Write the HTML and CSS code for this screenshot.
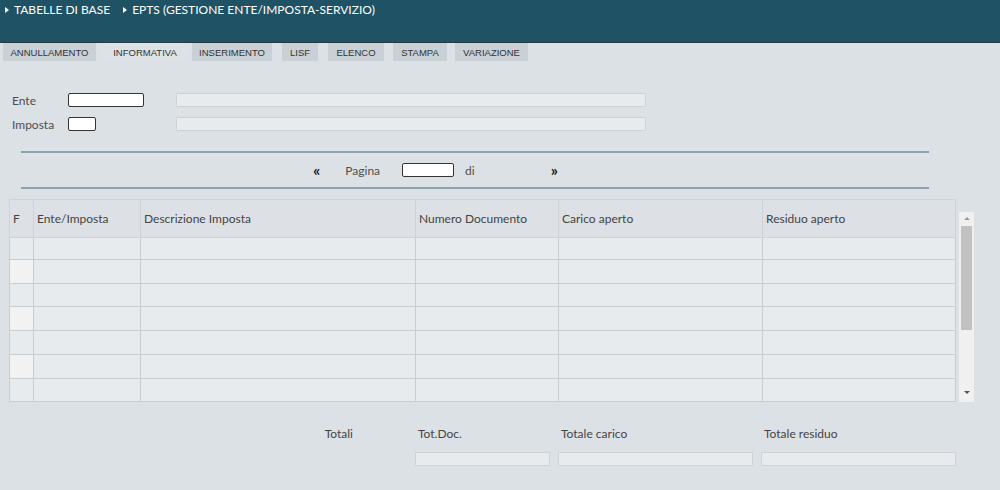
FILE: index.html
```html
<!DOCTYPE html>
<html lang="it">
<head>
<meta charset="utf-8">
<title>EPTS</title>
<link rel="stylesheet" href="styles.css">
</head>
<body>
<header class="topbar">
  <span class="crumb"><span class="tri"></span>TABELLE DI BASE</span>
  <span class="crumb"><span class="tri"></span>EPTS (GESTIONE ENTE/IMPOSTA-SERVIZIO)</span>
</header>
<nav class="tabs">
  <div class="tab t1">ANNULLAMENTO</div>
  <div class="tab t2 active">INFORMATIVA</div>
  <div class="tab t3">INSERIMENTO</div>
  <div class="tab t4">LISF</div>
  <div class="tab t5">ELENCO</div>
  <div class="tab t6">STAMPA</div>
  <div class="tab t7">VARIAZIONE</div>
</nav>
<main class="content">
  <section class="form">
    <div class="frow">
      <label class="flabel">Ente</label>
      <div class="inp inp-ente"></div>
      <div class="ro ro-long"></div>
    </div>
    <div class="frow">
      <label class="flabel">Imposta</label>
      <div class="inp inp-imp"></div>
      <div class="ro ro-long"></div>
    </div>
  </section>
  <section class="pager">
    <span class="nav prev">&laquo;</span>
    <span class="plabel">Pagina</span>
    <div class="inp inp-page"></div>
    <span class="di">di</span>
    <span class="nav next">&raquo;</span>
  </section>
  <section class="grid-wrap">
    <table class="grid">
      <colgroup>
        <col class="c1"><col class="c2"><col class="c3"><col class="c4"><col class="c5"><col class="c6">
      </colgroup>
      <thead>
        <tr><th>F</th><th>Ente/Imposta</th><th>Descrizione Imposta</th><th>Numero Documento</th><th>Carico aperto</th><th>Residuo aperto</th></tr>
      </thead>
      <tbody>
        <tr class="first"><td></td><td></td><td></td><td></td><td></td><td></td></tr>
        <tr class="alt"><td></td><td></td><td></td><td></td><td></td><td></td></tr>
        <tr class="short"><td></td><td></td><td></td><td></td><td></td><td></td></tr>
        <tr class="alt"><td></td><td></td><td></td><td></td><td></td><td></td></tr>
        <tr><td></td><td></td><td></td><td></td><td></td><td></td></tr>
        <tr class="alt"><td></td><td></td><td></td><td></td><td></td><td></td></tr>
        <tr class="short"><td></td><td></td><td></td><td></td><td></td><td></td></tr>
      </tbody>
    </table>
    <div class="scrollbar">
      <div class="arrow up"></div>
      <div class="thumb"></div>
      <div class="spacer"></div>
      <div class="arrow down"></div>
    </div>
  </section>
  <section class="totals">
    <div class="tl tl0">Totali</div>
    <div class="tl">Tot.Doc.</div>
    <div class="tl">Totale carico</div>
    <div class="tl">Totale residuo</div>
    <div></div>
    <div class="ro"></div>
    <div class="ro"></div>
    <div class="ro"></div>
  </section>
</main>
</body>
</html>
```

FILE: styles.css
```css
* { box-sizing: border-box; }
html, body { margin: 0; padding: 0; }
body {
  background: #dce1e5;
  font-family: Lato, "Open Sans", sans-serif;
  color: #4f4f4f;
  font-size: 12px;
  width: 1000px;
  height: 490px;
  overflow: hidden;
}
.topbar {
  height: 43px;
  background: #1f5264;
  border-bottom: 1px solid #263a44;
  padding: 2px 0 0 5px;
  display: flex;
  gap: 13px;
  color: #ffffff;
  font-size: 12px;
  line-height: 15px;
}
.crumb { display: flex; align-items: center; height: 15px; }
.tri {
  width: 0; height: 0;
  border-top: 3px solid transparent;
  border-bottom: 3px solid transparent;
  border-left: 4px solid #ffffff;
  margin-right: 5px;
}
.tabs {
  display: flex;
  height: 19px;
  padding-left: 3px;
  background: #dce1e5;
}
.tab {
  height: 18px;
  background: #c9d0d6;
  font-family: "Liberation Sans", Arial, sans-serif;
  font-size: 9.5px;
  color: #333;
  display: flex;
  align-items: center;
  justify-content: center;
}
.tab.active { background: #dde2e6; }
.t1 { width: 93px; margin-right: 6px; }
.t2 { width: 86px; margin-right: 4px; }
.t3 { width: 80px; margin-right: 10px; }
.t4 { width: 36px; margin-right: 10px; }
.t5 { width: 56px; margin-right: 9px; }
.t6 { width: 54px; margin-right: 8px; }
.t7 { width: 73px; }
.form { padding: 31px 0 0 12px; display: flex; flex-direction: column; gap: 10px; }
.frow { display: flex; align-items: center; height: 14px; }
.flabel { width: 56px; }
.inp {
  height: 14px;
  background: #fff;
  border: 1px solid #333;
  border-radius: 2px;
}
.inp-ente { width: 76px; margin-right: 32px; }
.inp-imp { width: 28px; margin-right: 80px; }
.ro {
  height: 14px;
  background: #e8ebee;
  border: 1px solid #cfd3d7;
  border-radius: 1px;
}
.ro-long { width: 470px; }
.pager {
  margin: 20px 71px 0 21px;
  border-top: 2px solid #8ea2ad;
  border-bottom: 2px solid #8ea2ad;
  height: 38px;
  display: flex;
  align-items: center;
  padding-left: 292px;
}
.nav { font-weight: bold; font-size: 16px; color: #222; line-height: 12px; }
.prev { margin-right: 25px; }
.plabel { margin-right: 22px; }
.inp-page { width: 52px; margin-right: 11px; }
.di { margin-right: 76px; }
.grid-wrap {
  margin: 10px 0 0 9px;
  display: flex;
  align-items: flex-start;
}
.grid {
  border-collapse: collapse;
  table-layout: fixed;
  width: 946px;
  border: 1px solid #d1d5d8;
}
.c1 { width: 24px; } .c2 { width: 107px; } .c3 { width: 275px; }
.c4 { width: 143px; } .c5 { width: 204px; } .c6 { width: 193px; }
.grid th {
  height: 38px;
  background: #dde1e5;
  font-weight: normal;
  text-align: left;
  padding: 0 3px;
  color: #444;
  border: 1px solid #cfd3d6;
}
.grid td {
  height: 24px;
  background: #e8ebee;
  border: 1px solid #cacdd0;
}
.grid tr.first td { height: 22px; }
.grid tr.short td { height: 23px; }
.grid tr.alt td:first-child { background: #f2f2f2; }
.scrollbar {
  margin: 13px 0 0 3px;
  width: 15px;
  height: 190px;
  background: #f0f0f0;
  display: flex;
  flex-direction: column;
  align-items: center;
  padding: 5px 0;
}
.arrow { width: 0; height: 0; border-left: 3px solid transparent; border-right: 3px solid transparent; }
.arrow.up { border-bottom: 3px solid #999; margin-bottom: 6px; }
.arrow.down { border-top: 3px solid #555; margin-bottom: 3px; }
.thumb { width: 11px; height: 104px; background: #c1c1c1; }
.spacer { flex: 1; }
.totals {
  margin: 24px 0 0 0;
  display: grid;
  grid-template-columns: 407px 135px 195px 195px;
  column-gap: 8px;
  row-gap: 10px;
  grid-template-rows: 16px 14px;
}
.tl { padding-left: 3px; color: #444; }
.tl0 { text-align: right; padding-right: 54px; }
```
